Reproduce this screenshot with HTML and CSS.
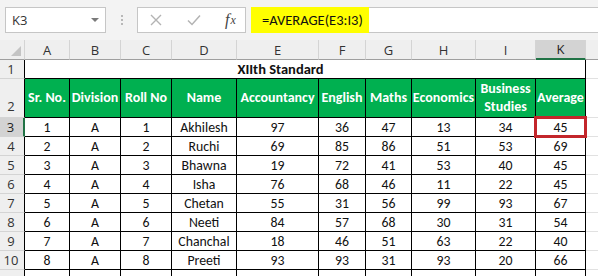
FILE: index.html
```html
<!DOCTYPE html>
<html>
<head>
<meta charset="utf-8">
<link rel="stylesheet" href="styles.css">
</head>
<body>
<div class="app">
  <div class="fbar">
    <div class="namebox"><span class="ref">K3</span><span class="caret"></span></div>
    <div class="grip"><i></i><i></i><i></i></div>
    <div class="fxbox">
      <span class="ico cancel">
        <svg width="12" height="12" viewBox="0 0 12 12"><path d="M1 1 L11 11 M11 1 L1 11" stroke="#b3b3b3" stroke-width="1.4" fill="none"/></svg>
      </span>
      <span class="ico enter">
        <svg width="14" height="12" viewBox="0 0 14 12"><path d="M1 6.5 L5 10.5 L13 1.5" stroke="#b3b3b3" stroke-width="1.5" fill="none"/></svg>
      </span>
      <span class="ico fx">f<span class="x">x</span></span>
    </div>
    <div class="formula"><span class="hl">=AVERAGE(E3:I3)</span></div>
  </div>
  <table class="sheet">
    <colgroup>
      <col class="c-rh"><col class="c-a"><col class="c-b"><col class="c-c"><col class="c-d"><col class="c-e"><col class="c-f"><col class="c-g"><col class="c-h"><col class="c-i"><col class="c-k"><col class="c-l">
    </colgroup>
    <tr class="colhdr">
      <th class="corner"><span class="tri"></span></th>
      <th>A</th><th>B</th><th>C</th><th>D</th><th>E</th><th>F</th><th>G</th><th>H</th><th>I</th><th class="sel">K</th><th class="last"></th>
    </tr>
    <tr class="r1">
      <th class="rh">1</th>
      <td class="title" colspan="9">XIIth Standard</td>
      <td class="k1"></td>
      <td class="blank"></td>
    </tr>
    <tr class="r2">
      <th class="rh bottom">2</th>
      <td class="hd">Sr. No.</td><td class="hd">Division</td><td class="hd">Roll No</td><td class="hd">Name</td><td class="hd">Accountancy</td><td class="hd">English</td><td class="hd">Maths</td><td class="hd">Economics</td><td class="hd">Business<br>Studies</td><td class="hd">Average</td>
      <td class="blank"></td>
    </tr>
    <tr>
      <th class="rh selrow">3</th>
      <td>1</td><td>A</td><td>1</td><td>Akhilesh</td><td>97</td><td>36</td><td>47</td><td>13</td><td>34</td><td class="active">45</td>
      <td class="blank"></td>
    </tr>
    <tr>
      <th class="rh">4</th>
      <td>2</td><td>A</td><td>2</td><td>Ruchi</td><td>69</td><td>85</td><td>86</td><td>51</td><td>53</td><td>69</td>
      <td class="blank"></td>
    </tr>
    <tr>
      <th class="rh">5</th>
      <td>3</td><td>A</td><td>3</td><td>Bhawna</td><td>19</td><td>72</td><td>41</td><td>53</td><td>40</td><td>45</td>
      <td class="blank"></td>
    </tr>
    <tr>
      <th class="rh">6</th>
      <td>4</td><td>A</td><td>4</td><td>Isha</td><td>76</td><td>68</td><td>46</td><td>11</td><td>22</td><td>45</td>
      <td class="blank"></td>
    </tr>
    <tr>
      <th class="rh">7</th>
      <td>5</td><td>A</td><td>5</td><td>Chetan</td><td>55</td><td>31</td><td>56</td><td>99</td><td>93</td><td>67</td>
      <td class="blank"></td>
    </tr>
    <tr>
      <th class="rh">8</th>
      <td>6</td><td>A</td><td>6</td><td>Neeti</td><td>84</td><td>57</td><td>68</td><td>30</td><td>31</td><td>54</td>
      <td class="blank"></td>
    </tr>
    <tr>
      <th class="rh">9</th>
      <td>7</td><td>A</td><td>7</td><td>Chanchal</td><td>18</td><td>46</td><td>51</td><td>63</td><td>22</td><td>40</td>
      <td class="blank"></td>
    </tr>
    <tr>
      <th class="rh">10</th>
      <td>8</td><td>A</td><td>8</td><td>Preeti</td><td>93</td><td>93</td><td>31</td><td>93</td><td>20</td><td>66</td>
      <td class="blank"></td>
    </tr>
    <tr>
      <th class="rh"></th>
      <td></td><td></td><td></td><td></td><td></td><td></td><td></td><td></td><td></td><td></td>
      <td class="blank"></td>
    </tr>
  </table>
</div>
</body>
</html>
```

FILE: styles.css
```css
* { box-sizing: border-box; }
html, body { margin: 0; padding: 0; }
body { width: 598px; height: 276px; overflow: hidden; background: #fff; }
.app { width: 598px; height: 276px; overflow: hidden; background: #f3f3f3; }

.fbar {
  height: 40px;
  padding-top: 7px;
  display: flex;
  align-items: flex-start;
  background: #f3f3f3;
}
.namebox {
  margin-left: 5px;
  width: 101px;
  height: 26px;
  background: #fff;
  border: 1px solid #c6c6c6;
  display: flex;
  align-items: center;
  justify-content: space-between;
  padding: 0 6px 0 6px;
  font-family: "Open Sans", "Noto Sans", sans-serif;
  font-size: 13px;
  color: #333;
}
.caret {
  width: 0; height: 0;
  border-left: 4px solid transparent;
  border-right: 4px solid transparent;
  border-top: 4px solid #7a7a7a;
}
.grip {
  width: 31px;
  height: 26px;
  display: flex;
  flex-direction: column;
  align-items: center;
  justify-content: center;
  gap: 2px;
}
.grip i { display: block; width: 2px; height: 2px; background: #b8b8b8; }
.fxbox {
  width: 109px;
  height: 26px;
  background: #fff;
  border: 1px solid #c6c6c6;
  display: flex;
  align-items: center;
  padding-left: 12px;
}
.ico { display: flex; align-items: center; justify-content: center; }
.cancel { width: 12px; }
.enter { width: 14px; margin-left: 25px; }
.fx {
  margin-left: 24px;
  font-family: "Liberation Serif", "DejaVu Serif", serif;
  font-style: italic;
  font-size: 16px;
  color: #444;
}
.fx .x { font-size: 12px; margin-left: 1px; }
.formula {
  margin-left: 5px;
  flex: 1;
  height: 26px;
  background: #fff;
  border-top: 1px solid #c6c6c6;
  border-bottom: 1px solid #c6c6c6;
  display: flex;
}
.hl {
  display: flex;
  align-items: center;
  background: #ffff00;
  height: 26px;
  margin-top: -1px;
  padding: 0 6px 0 11px;
  font-family: Calibri, Carlito, Lato, "Open Sans", sans-serif;
  font-size: 14.5px;
  color: #111;
}

.sheet {
  border-collapse: separate;
  border-spacing: 0;
  table-layout: fixed;
  width: 598px;
  font-family: Calibri, Carlito, Lato, "Open Sans", sans-serif;
  font-size: 13.8px;
  color: #111;
}
.c-rh { width: 25px; }
.c-a { width: 45px; }
.c-b { width: 51px; }
.c-c { width: 51px; }
.c-d { width: 65px; }
.c-e { width: 82px; }
.c-f { width: 47px; }
.c-g { width: 46px; }
.c-h { width: 64px; }
.c-i { width: 60px; }
.c-k { width: 50px; }
.c-l { width: 12px; }

.sheet th, .sheet td {
  padding: 0;
  overflow: hidden;
  white-space: nowrap;
  text-align: center;
}

.colhdr th {
  height: 20px;
  background: #efefef;
  border-right: 1px solid #d4d4d4;
  border-bottom: 1px solid #9f9f9f;
  font-family: "Open Sans", "Noto Sans", sans-serif;
  font-weight: normal;
  font-size: 13px;
  color: #333;
  vertical-align: middle;
}
.colhdr th.corner { position: relative; border-right-color: #d4d4d4; }
.tri {
  position: absolute;
  right: 3px; bottom: 3px;
  width: 0; height: 0;
  border-left: 10px solid transparent;
  border-bottom: 10px solid #c4c4c4;
}
.colhdr th.sel {
  background: #d3d3d3;
  border-bottom: 2px solid #217346;
  color: #222;
}
.colhdr th.last { border-right: none; }

.rh {
  background: #efefef;
  border-right: 1px solid #000;
  border-bottom: 1px solid #d4d4d4;
  font-family: "Open Sans", "Noto Sans", sans-serif;
  font-weight: normal;
  font-size: 13px;
  color: #333;
  vertical-align: middle;
  padding-right: 2px !important;
}
.rh.bottom { vertical-align: bottom; padding-bottom: 2px !important; }
.rh.selrow {
  background: #d3d3d3;
  border-right: 2px solid #217346;
  color: #222;
}

.sheet td {
  height: 19px;
  background: #fff;
  border-right: 1px solid #000;
  border-bottom: 1px solid #000;
  vertical-align: middle;
  line-height: 17px;
}
.r1 td { height: 19px; }
.title {
  font-weight: bold;
  font-size: 14.5px;
  border-right: none !important;
}
.r2 td { height: 39px; }
.sheet td.hd {
  background: #00b050;
  color: #fff;
  font-weight: bold;
  font-size: 14px;
  line-height: 18px;
}
.sheet td.blank {
  border-right: none;
  border-bottom: 1px solid #e1e1e1;
}
.sheet td.active { position: relative; overflow: visible; }
.sheet td.active::after {
  content: "";
  position: absolute;
  left: -2px; top: -2px; right: -2px; bottom: -2px;
  border: 3px solid #c3262b;
}
```
